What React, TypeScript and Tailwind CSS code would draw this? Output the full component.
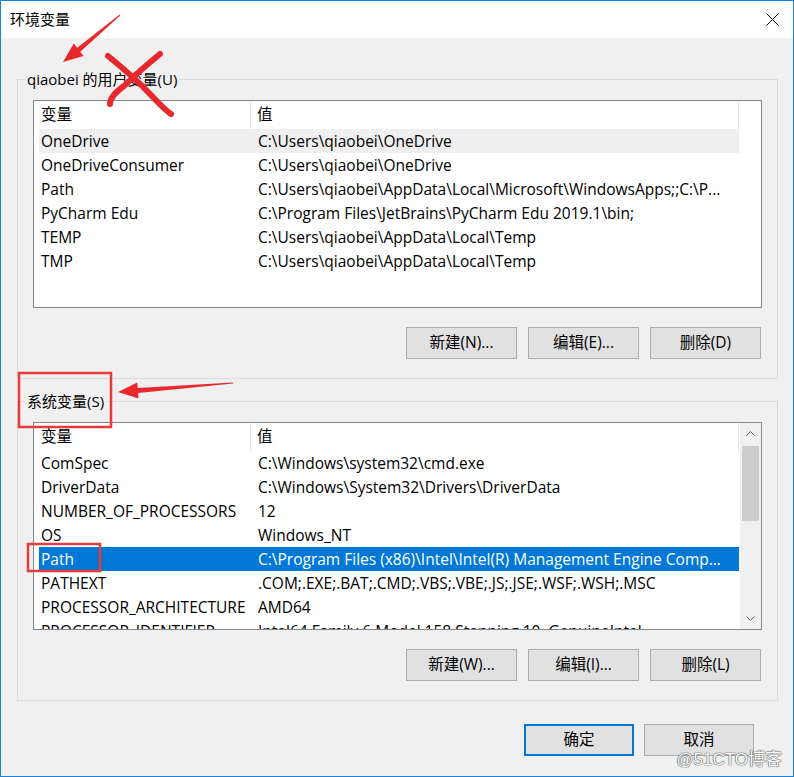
import React from 'react';

const userVars = [
  { name: 'OneDrive', value: 'C:\\Users\\qiaobei\\OneDrive' },
  { name: 'OneDriveConsumer', value: 'C:\\Users\\qiaobei\\OneDrive' },
  { name: 'Path', value: 'C:\\Users\\qiaobei\\AppData\\Local\\Microsoft\\WindowsApps;;C:\\P...' },
  { name: 'PyCharm Edu', value: 'C:\\Program Files\\JetBrains\\PyCharm Edu 2019.1\\bin;' },
  { name: 'TEMP', value: 'C:\\Users\\qiaobei\\AppData\\Local\\Temp' },
  { name: 'TMP', value: 'C:\\Users\\qiaobei\\AppData\\Local\\Temp' },
];

const systemVars = [
  { name: 'ComSpec', value: 'C:\\Windows\\system32\\cmd.exe' },
  { name: 'DriverData', value: 'C:\\Windows\\System32\\Drivers\\DriverData' },
  { name: 'NUMBER_OF_PROCESSORS', value: '12' },
  { name: 'OS', value: 'Windows_NT' },
  { name: 'Path', value: 'C:\\Program Files (x86)\\Intel\\Intel(R) Management Engine Comp...' },
  { name: 'PATHEXT', value: '.COM;.EXE;.BAT;.CMD;.VBS;.VBE;.JS;.JSE;.WSF;.WSH;.MSC' },
  { name: 'PROCESSOR_ARCHITECTURE', value: 'AMD64' },
  { name: 'PROCESSOR_IDENTIFIER', value: 'Intel64 Family 6 Model 158 Stepping 10, GenuineIntel' },
];

type Row = { name: string; value: string };

function VarList({ rows, hover, selected, scroll }: { rows: Row[]; hover?: number; selected?: number; scroll?: boolean }) {
  return (
    <div className="h-[208px] w-full border border-[#828790] bg-white flex overflow-hidden">
      <div className="flex-1 overflow-hidden pl-[5px]">
        {/* header */}
        <div className="flex h-[28px] items-center w-[700px]">
          <div className="w-[212px] pl-[2px] h-full flex items-center border-r border-[#e5e5e5]">变量</div>
          <div className="flex-1 pl-[6px] h-full flex items-center border-r border-[#e5e5e5]">值</div>
        </div>
        {rows.map((r, i) => {
          const isSel = i === selected;
          const isHover = i === hover;
          return (
            <div
              key={r.name}
              className={`flex h-[24px] leading-[24px] w-[700px] whitespace-nowrap ${
                isSel ? 'bg-[#0078d7] text-white' : isHover ? 'bg-[#efefef]' : ''
              }`}
            >
              <div className="w-[212px] pl-[2px] overflow-hidden">{r.name}</div>
              <div className="flex-1 pl-[7px] overflow-hidden">{r.value}</div>
            </div>
          );
        })}
      </div>
      {scroll && (
        <div className="w-[21px] bg-[#f0f0f0] flex flex-col items-center">
          <div className="h-[21px] flex items-center justify-center">
            <svg width="9" height="5" viewBox="0 0 9 5">
              <polyline points="0.5,4.5 4.5,0.5 8.5,4.5" fill="none" stroke="#606060" strokeWidth="1" />
            </svg>
          </div>
          <div className="w-[17px] h-[75px] mt-[2px] bg-[#cdcdcd]" />
          <div className="flex-1" />
          <div className="h-[21px] flex items-center justify-center">
            <svg width="9" height="5" viewBox="0 0 9 5">
              <polyline points="0.5,0.5 4.5,4.5 8.5,0.5" fill="none" stroke="#606060" strokeWidth="1" />
            </svg>
          </div>
        </div>
      )}
    </div>
  );
}

function Btn({ children, primary }: { children: React.ReactNode; primary?: boolean }) {
  return (
    <button
      className={`w-full h-[32px] bg-[#e1e1e1] flex items-center justify-center ${
        primary ? 'border-2 border-[#0078d7]' : 'border border-[#adadad]'
      }`}
    >
      {children}
    </button>
  );
}

function Group({ label, rows, hover, selected, scroll, buttons }: {
  label: string; rows: Row[]; hover?: number; selected?: number; scroll?: boolean; buttons: string[];
}) {
  return (
    <fieldset className="w-[761px] ml-[16px] border border-[#dcdcdc] px-[15px] pb-[19px]">
      <legend className="ml-[-8px] px-[2px] leading-[20px] text-[15px]">{label}</legend>
      <div className="pt-[11px]">
        <VarList rows={rows} hover={hover} selected={selected} scroll={scroll} />
      </div>
      <div className="flex justify-end gap-[11px] mt-[19px] mr-[1px]">
        {buttons.map((b) => (
          <div key={b} className="w-[111px]">
            <Btn>{b}</Btn>
          </div>
        ))}
      </div>
    </fieldset>
  );
}

export default function App() {
  return (
    <div className="relative w-[794px] h-[777px] text-[15.5px] text-black font-['Open_Sans','Noto_Sans_CJK_SC',sans-serif]">
      <div className="w-full h-full border border-[#1883d7] bg-[#f0f0f0] flex flex-col">
        {/* title bar */}
        <div className="h-[37px] bg-white flex items-center justify-between pl-[9px] pr-[14px] shrink-0">
          <span className="text-[15px] font-['Noto_Sans_CJK_SC',sans-serif]">环境变量</span>
          <svg width="13" height="13" viewBox="0 0 13 13">
            <path d="M0.5 0.5L12.5 12.5M12.5 0.5L0.5 12.5" stroke="#000" strokeWidth="1" />
          </svg>
        </div>

        <div className="pt-[31px]">
          <Group label="qiaobei 的用户变量(U)" rows={userVars} hover={0} buttons={['新建(N)...', '编辑(E)...', '删除(D)']} />
        </div>
        <div className="mt-[12px]">
          <Group
            label="系统变量(S)"
            rows={systemVars}
            selected={4}
            scroll
            buttons={['新建(W)...', '编辑(I)...', '删除(L)']}
          />
        </div>

        <div className="flex justify-end gap-[10px] pr-[39px] mt-[23px]">
          <div className="w-[110px]">
            <Btn primary>确定</Btn>
          </div>
          <div className="w-[110px]">
            <Btn>取消</Btn>
          </div>
        </div>
      </div>

      {/* red annotations */}
      <svg className="absolute top-0 left-0 pointer-events-none" width="794" height="777" viewBox="0 0 794 777">
        <polygon
          points="120.3,15.4 80.2,51.7 83.6,56 63,62 73.8,43.4 77.2,47.7 119.7,14.6"
          fill="#e7292e"
        />
        <path d="M108 56 Q 135 78 150 94 T 171 114" fill="none" stroke="#e7292e" strokeWidth="6" strokeLinecap="round" />
        <path d="M160 54 Q 138 72 124 86 Q 110 96 110 104" fill="none" stroke="#e7292e" strokeWidth="6" strokeLinecap="round" />
        <rect x="19" y="373" width="92" height="54" fill="none" stroke="#e53b3b" strokeWidth="2.5" />
        <polygon
          points="233,383.5 138.1,392.9 138.5,398.4 118,392 137.3,382.4 137.7,387.9 233,382.5"
          fill="#e7292e"
        />
        <rect x="28" y="544" width="72" height="27" fill="none" stroke="#e53b3b" strokeWidth="2.5" />
      </svg>

      {/* watermark */}
      <div className="absolute right-[12px] bottom-[5px] text-[17px] text-white font-['Liberation_Sans','Noto_Sans_CJK_SC',sans-serif] [text-shadow:0_0_1px_#555,0_0_1px_#555,0_0_1px_#555]">
        @51CTO博客
      </div>
    </div>
  );
}
